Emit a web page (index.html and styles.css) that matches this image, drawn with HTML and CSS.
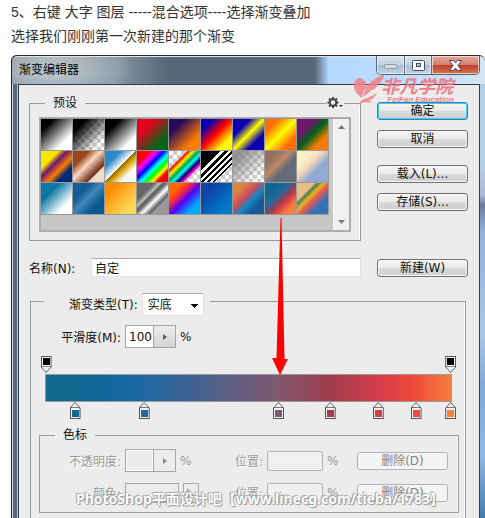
FILE: index.html
```html
<!DOCTYPE html>
<html lang="zh-CN">
	<head>
		<meta charset="utf-8" />
		<title>渐变编辑器</title>
		<link rel="stylesheet" href="styles.css">
	</head>
	<body>
		<div class="intro">
			<p>5、右键 大字 图层 -----混合选项----选择渐变叠加</p>
			<p>选择我们刚刚第一次新建的那个渐变</p>
		</div>

		<div class="window">
			<div class="titlebar">
				<h1>渐变编辑器</h1>
				<div class="caption">
					<button type="button" class="min" aria-label="最小化"><svg width="13" height="5"><rect x=".5" y=".5" width="12" height="4" rx="1" fill="#d5dce1" stroke="#929ba3"/></svg></button>
					<button type="button" class="max" aria-label="最大化"><svg width="13" height="11"><rect x=".5" y=".5" width="12" height="10" rx="1" fill="#fff" stroke="#454e5c"/><rect x="4.5" y="3.5" width="4" height="3" fill="#b9c4d0" stroke="#454e5c"/></svg></button>
					<button type="button" class="close" aria-label="关闭"><svg width="13" height="11"><path d="M.5.5h4l2 2.500 2-2.500h4L9 5.500l3.500 5h-4l-2-2.500-2 2.500h-4L4 5.500z" fill="#fff" stroke="#584850"/></svg></button>
				</div>
			</div>

			<form class="panel">
				<div class="top">
					<fieldset class="presets">
						<legend>预设</legend>
						<button type="button" class="gear" aria-label="选项">
							<svg width="17" height="14" viewBox="0 0 17 14">
								<circle cx="6" cy="6.500" r="3.300" fill="none" stroke="#444" stroke-width="2"/>
								<path d="M6 1v2M6 10v2M.5 6.500h2M9.500 6.500h2M2 2.500l1.500 1.500M8.500 9l1.500 1.500M10 2.500L8.500 4M3.500 9L2 10.500" stroke="#444" stroke-width="2"/>
								<path d="M12 9h4l-2 2z" fill="#222"/>
							</svg>
						</button>
						<div class="list">
							<div class="swatches">
								<button type="button" class="g1" aria-label="前景到背景"></button>
								<button type="button" class="g2" aria-label="前景到透明"></button>
								<button type="button" class="g3" aria-label="黑白"></button>
								<button type="button" class="g4" aria-label="红绿"></button>
								<button type="button" class="g5" aria-label="紫橙"></button>
								<button type="button" class="g6" aria-label="蓝红黄"></button>
								<button type="button" class="g7" aria-label="蓝黄蓝"></button>
								<button type="button" class="g8" aria-label="橙黄橙"></button>
								<button type="button" class="g9" aria-label="紫绿橙"></button>
								<button type="button" class="g10" aria-label="黄紫橙蓝"></button>
								<button type="button" class="g11" aria-label="铜色"></button>
								<button type="button" class="g12" aria-label="铬黄"></button>
								<button type="button" class="g13" aria-label="色谱"></button>
								<button type="button" class="g14" aria-label="透明彩虹"></button>
								<button type="button" class="g15" aria-label="透明条纹"></button>
								<button type="button" class="g16" aria-label="中灰密度"></button>
								<button type="button" class="g17" aria-label="棕灰"></button>
								<button type="button" class="g18" aria-label="米蓝"></button>
								<button type="button" class="g19" aria-label="蓝白"></button>
								<button type="button" class="g20" aria-label="深蓝"></button>
								<button type="button" class="g21" aria-label="橙黄"></button>
								<button type="button" class="g22" aria-label="银色"></button>
								<button type="button" class="g23" aria-label="橙紫蓝"></button>
								<button type="button" class="g24" aria-label="蓝色"></button>
								<button type="button" class="g25" aria-label="橙红蓝"></button>
								<button type="button" class="g26" aria-label="自定"></button>
								<button type="button" class="g27" aria-label="彩色"></button>
							</div>
							<div class="scroll">
								<svg width="7" height="4"><path d="M0 4L3.500 0 7 4z" fill="#777"/></svg>
								<svg width="7" height="4"><path d="M0 0h7L3.500 4z" fill="#777"/></svg>
							</div>
						</div>
					</fieldset>
					<div class="actions">
						<button type="button" class="btn ok">确定</button>
						<button type="button" class="btn">取消</button>
						<button type="button" class="btn load">载入(L)...</button>
						<button type="button" class="btn">存储(S)...</button>
					</div>
				</div>

				<div class="name-row">
					<label for="name">名称(N):</label>
					<input type="text" id="name" value="自定">
					<button type="button" class="btn">新建(W)</button>
				</div>

				<fieldset class="gradient">
					<legend>
						<label for="type">渐变类型(T):</label>
						<select id="type"><option>实底</option></select>
					</legend>
					<div class="smooth">
						<label for="smooth">平滑度(M):</label>
						<span class="spin">
							<input type="text" id="smooth" value="100">
							<button type="button" aria-label="调整平滑度"><svg width="4" height="6"><path d="M0 0l4 3-4 3z" fill="#4a5a9a"/></svg></button>
						</span>
						<span>%</span>
					</div>

					<div class="editor">
						<div class="rail upper">
							<button type="button" class="stop" aria-label="不透明度色标" style="left:0.4%"><i style="background:#000"></i></button>
							<button type="button" class="stop" aria-label="不透明度色标" style="left:99.8%"><i style="background:#000"></i></button>
						</div>
						<div class="bar"></div>
						<div class="rail lower">
							<button type="button" class="stop" aria-label="色标" style="left:7.5%"><i style="background:#126890"></i></button>
							<button type="button" class="stop" aria-label="色标" style="left:24.5%"><i style="background:#1f68a4"></i></button>
							<button type="button" class="stop" aria-label="色标" style="left:57.5%"><i style="background:#80586f"></i></button>
							<button type="button" class="stop" aria-label="色标" style="left:70.2%"><i style="background:#a03c4c"></i></button>
							<button type="button" class="stop" aria-label="色标" style="left:82%"><i style="background:#d53c4a"></i></button>
							<button type="button" class="stop" aria-label="色标" style="left:91.3%"><i style="background:#f04b38"></i></button>
							<button type="button" class="stop" aria-label="色标" style="left:99.8%"><i style="background:#f4813f"></i></button>
						</div>
					</div>

					<fieldset class="stops">
						<legend>色标</legend>
						<div class="stop-row">
							<label for="opacity">不透明度:</label>
							<div class="field">
								<span class="spin">
									<input type="text" id="opacity" disabled>
									<button type="button" aria-label="调整不透明度" disabled><svg width="4" height="6"><path d="M0 0l4 3-4 3z" fill="#888"/></svg></button>
								</span>
								<span>%</span>
							</div>
							<label for="pos1">位置:</label>
							<div class="field"><input type="text" class="pos" id="pos1" disabled><span>%</span></div>
							<button type="button" class="btn" disabled>删除(D)</button>
						</div>
						<div class="stop-row">
							<label for="color">颜色:</label>
							<div class="field">
								<button type="button" class="color" id="color" disabled></button>
								<button type="button" class="pick" aria-label="选择颜色" disabled><svg width="8" height="10"><path d="M0 0v10l8-2z" fill="#aaa"/></svg></button>
							</div>
							<label for="pos2">位置:</label>
							<div class="field"><input type="text" class="pos" id="pos2" disabled><span>%</span></div>
							<button type="button" class="btn" disabled>删除(D)</button>
						</div>
					</fieldset>
				</fieldset>
			</form>

			<!-- 箭头 -->
			<svg class="arrow" width="16" height="157" viewBox="0 0 16 157"><path d="M8.500 0h1l3 141h3.500L8 157 0 140h4.500z" fill="#f00"/></svg>

			<!-- 水印 -->
			<div class="logo">
				<svg width="30" height="30" viewBox="0 0 30 30">
					<path d="M8 23C-3 16-2 5 5 3c5 0 8 5 8 9-3 3-5 7-5 11z" fill="#ef8087"/>
					<path d="M9 22C11 11 18 3 30 0c0 3-2 6-4 8l-2 1c-1 3-3 5-5 6l-2 0C15 18 12 20 9 22z" fill="#ef8087"/>
					<path d="M5 30c1-4 4-6 8-7 4-2 7-3 10-5-2 4-5 7-9 8 2 0 4 1 5 1-4 2-9-2-14 3z" fill="#ef8087"/>
				</svg>
				<div>
					<b>非凡学院</b>
					<small>FeiFan Education</small>
				</div>
			</div>
			<p class="mark">PhotoShop平面设计吧【www.linecg.com/tieba/1783】</p>
		</div>
	</body>
</html>
```
FILE: styles.css
```css
*{
	margin: 0;
	padding: 0;
	box-sizing: border-box;
}
body{
	padding-left: 11px;
	background: #fff;
	color: #111;
	font-family: "DejaVu Sans","Noto Sans CJK SC",sans-serif;
	font-size: 12px;
}
button,input,select{
	font: inherit;
	color: inherit;
}
fieldset{
	border: 1px solid #9c9c9c;
	min-width: 0;
	box-shadow: inset -1px 0 #fff;
}
.intro{
	padding-bottom: 7px;
	font-family: "Liberation Sans","Noto Sans CJK SC",sans-serif;
	font-size: 14px;
	line-height: 24px;
	color: #333;
	white-space: nowrap;
}
.window{
	position: relative;
	padding: 0 5px 0 7px;
	border-radius: 6px 6px 0 0;
	background:
		linear-gradient(#b5cfe9,#b5cfe9 110px,#b0b8d0 140px,#6a7a9c 150px,#8fb0d8 175px,#a8c8e8 280px,#80a8d8 330px,#8fb8e4 400px,#427ab0) right/5px 100% no-repeat,
		linear-gradient(90deg,#1c262e 1px,#d4dde4 1px,#d4dde4 2px,#566879 2px,#566879 6px,#b8c4cc 6px) left/7px 100% no-repeat,
		#566879;
}
.titlebar{
	display: flex;
	justify-content: space-between;
	height: 29px;
	margin: 0 -5px 0 -7px;
	padding: 0 0 0 7px;
	border-top: 1px solid #222b32;
	border-left: 1px solid #222b32;
	border-radius: 6px 6px 0 0;
	box-shadow: inset 0 1px #dfe7ec;
	background:
		radial-gradient(80px 34px at 42px 14px,#c2cbd1 0,rgba(176,187,195,.8) 50%,rgba(130,146,159,0) 100%),
		linear-gradient(90deg,#75828d 0,#8494a0 22%,#566879 33%,#566879 64%,#b4d8ff 67%,#bcdcfc 80%,#d4e4f4);
}
.titlebar h1{
	font-size: 12px;
	font-weight: normal;
	line-height: 28px;
	color: #000;
}
.caption{
	display: flex;
	height: 19px;
	margin-right: 5px;
	border: 1px solid #536274;
	border-top: 0;
	border-radius: 0 0 5px 5px;
	overflow: hidden;
}
.caption button{
	display: flex;
	align-items: center;
	justify-content: center;
	border: 0;
	border-right: 1px solid #59687b;
	box-shadow: inset 0 0 0 1px rgba(255,255,255,.6);
	background: linear-gradient(#d6e2ee,#c1d1e1 50%,#a6bbcf 50%,#bed4e8);
}
.caption .min{
	width: 28px;
	padding-top: 3px;
}
.caption .max{
	width: 27px;
}
.caption .close{
	width: 47px;
	border-right: 0;
	background: linear-gradient(#e3a698,#d28273 48%,#b83d29 50%,#d57a54);
}
.panel{
	padding: 10px 11px 0 10px;
	border: 1px solid #303d48;
	border-bottom: 0;
	background: #ececec;
}
.top{
	display: flex;
	gap: 16px;
}
.presets{
	position: relative;
	flex: 1;
	padding: 6px 9px 8px;
}
.presets legend,.stops legend{
	height: 16px;
	margin-left: 15px;
	padding: 0 8px;
	line-height: 16px;
}
.presets legend{
	margin-left: 6px;
}
.gear{
	position: absolute;
	top: -15px;
	right: 16px;
	width: 17px;
	height: 14px;
	border: 0;
	background: #ececec;
}
.gear svg{
	display: block;
}
.list{
	display: flex;
	justify-content: space-between;
	height: 115px;
	border: 2px solid #acacac;
	background: #c6c6c6;
}
.swatches{
	display: grid;
	grid-template-columns: repeat(9,31px);
	grid-auto-rows: 31px;
	align-content: start;
	gap: 1px;
}
.swatches button{
	border: 0;
	outline: 1px solid #999;
}
.scroll{
	display: flex;
	flex-direction: column;
	align-items: center;
	justify-content: space-between;
	width: 16px;
	padding: 6px 0;
	border-left: 1px solid #fff;
	background: #f0f0f0;
}
.g1{background: linear-gradient(135deg,#000 20%,#fff 75%);}
.g2{background: linear-gradient(135deg,#000 22%,rgba(0,0,0,0) 80%),repeating-conic-gradient(#ccc 0 25%,#fff 0 50%) 0 0/8px 8px;}
.g3{background: linear-gradient(135deg,#000 25%,#fff 78%);}
.g4{background: linear-gradient(135deg,#e60020 28%,#066418 75%);}
.g5{background: linear-gradient(135deg,#290a59 25%,#ff7c00 75%);}
.g6{background: linear-gradient(135deg,#0a00b2 20%,#f00 48%,#fffc00 78%);}
.g7{background: linear-gradient(135deg,#0a00b2 28%,#fffc00 50%,#0a00b2 73%);}
.g8{background: linear-gradient(135deg,#ff6e02 22%,#ff0 50%,#ff6e02 78%);}
.g9{background: linear-gradient(135deg,#6f156c 28%,#00601b 50%,#fd7c00 75%);}
.g10{background: linear-gradient(135deg,#f9e600 28%,#6f156c 42%,#fd7c00 60%,#002874 76%);}
.g11{background: linear-gradient(135deg,#97461a 25%,#fbd8c5 45%,#6c2e16 72%,#efdbcd 76%);}
.g12{background: linear-gradient(135deg,#2989cc 25%,#fff 49%,#906a00 50%,#d99f00 58%,#fff 76%);}
.g13{background: linear-gradient(135deg,#f00 20%,#f0f 32%,#00f 44%,#0ff 55%,#0f0 65%,#ff0 74%,#f00 82%);}
.g14{background: linear-gradient(135deg,rgba(255,0,0,0) 28%,#f00 31%,#fff200 39%,#00a651 48%,#0ff 56%,#006 64%,#f0c 72%,rgba(255,0,0,0) 76%),repeating-conic-gradient(#ccc 0 25%,#fff 0 50%) 0 0/8px 8px;}
.g15{background: linear-gradient(135deg,#000 32%,#fff 32% 38%,#000 38% 44%,#fff 44% 49%,#000 49% 54%,#fff 54% 59%,#000 59% 64%,#fff 64% 68%,#000 68% 72%,transparent 72%),repeating-conic-gradient(#ccc 0 25%,#fff 0 50%) 0 0/8px 8px;}
.g16{background: linear-gradient(135deg,rgba(128,128,128,.8) 20%,rgba(128,128,128,0) 80%),repeating-conic-gradient(#ccc 0 25%,#fff 0 50%) 0 0/8px 8px;}
.g17{background: linear-gradient(135deg,#926f5e 20%,#bd8866 42%,#646c78 60%);}
.g18{background: linear-gradient(135deg,#f9f0c8 25%,#f5d9bb 42%,#90aad4 62%);}
.g19{background: linear-gradient(135deg,#0a78a5 30%,#fff 76%);}
.g20{background: linear-gradient(135deg,#135d94 30%,#4387b8 48%,#085b92 72%);}
.g21{background: linear-gradient(135deg,#ff8c00 20%,#ffd858 80%);}
.g22{background: linear-gradient(135deg,#666 28%,#c0c0b8 38%,#666 42%,#666 47%,#fff 57%,#606060 69%,#999 74%);}
.g23{background: linear-gradient(135deg,#ff6a00 20%,#ff2838 35%,#5000ff 53%,#0af 78%);}
.g24{background: linear-gradient(135deg,#0c44a8 25%,#0479c8 78%);}
.g25{background: linear-gradient(135deg,#dc843c 20%,#cc4c60 42%,#1688c0 58%,#165898 76%);}
.g26{background: linear-gradient(135deg,#106890 22%,#2468a0 40%,#a03c4c 57%,#e84444 68%,#f4803f 80%);}
.g27{background: linear-gradient(135deg,#e8bc84 28%,#4d7e58 34%,#e6b81c 43%,#ea5558 54%,#3074b8 72%);}
.actions{
	display: flex;
	flex-direction: column;
	gap: 10px;
	width: 91px;
	padding-top: 7px;
}
.load{
	margin-top: 7px;
}
.btn{
	display: block;
	width: 91px;
	height: 18px;
	border: 1px solid #707070;
	border-radius: 3px;
	background: linear-gradient(#f4f4f4,#ebebeb 50%,#dadada 50%,#cfcfcf);
	box-shadow: inset 0 0 0 1px #f8f8f8;
	line-height: 16px;
	text-align: center;
}
.btn.ok{
	border-color: #3c7fb1;
	box-shadow: inset 0 0 0 1px #38d0f8;
}
.btn:disabled{
	border-color: #adb2b5;
	background: #f4f4f4;
	color: #838383;
}
.name-row{
	display: grid;
	grid-template-columns: 62px 1fr 107px;
	align-items: center;
	margin-top: 17px;
}
.name-row input{
	height: 19px;
	padding-left: 3px;
	border: 1px solid #e2e3ea;
	border-top-color: #abadb3;
	background: #fff;
}
.name-row .btn{
	justify-self: end;
}
.gradient{
	margin: 16px 2px 0 1px;
	padding: 15px 6px 5px 8px;
	border-bottom: 0;
}
.gradient > legend{
	display: flex;
	gap: 4px;
	height: 17px;
	margin-left: 5px;
	padding: 0 6px 0 25px;
}
.gradient > legend label{
	line-height: 24px;
}
.gradient select{
	width: 62px;
	height: 23px;
	padding: 0 5px;
	border: 1px solid #e2e3ea;
	border-top-color: #abadb3;
	border-radius: 0;
	appearance: none;
	background:
		linear-gradient(to bottom left,#000 50%,transparent 50%) 48px 10px/4px 4px no-repeat,
		linear-gradient(to bottom right,#000 50%,transparent 50%) 52px 10px/4px 4px no-repeat,
		#fff;
}
.smooth{
	display: flex;
	align-items: center;
	gap: 4px;
	height: 23px;
}
.smooth label{
	width: 82px;
	text-align: right;
}
.spin{
	display: flex;
	width: 51px;
	height: 23px;
	border: 1px solid #a5a5aa;
}
.spin input{
	width: 28px;
	padding-left: 3px;
	border: 0;
	border-right: 1px solid #a5a5aa;
	background: #fff;
}
.spin button{
	display: flex;
	flex: 1;
	align-items: center;
	justify-content: center;
	border: 0;
	background: linear-gradient(#eee,#d4d4d4);
}
.editor{
	margin: 8px 7px 8px 6px;
}
.rail{
	position: relative;
	height: 18px;
}
.rail.lower{
	height: 17px;
}
.bar{
	height: 28px;
	border: 1px solid #999;
	background: linear-gradient(90deg,#126890 7.5%,#1268a0 16%,#1f68a4 24.5%,#80586f 57.5%,#a03c4c 70%,#d53c4a 82%,#f04b38 91.3%,#f4813f);
}
.stop{
	position: absolute;
	width: 11px;
	height: 17px;
	margin-left: -6px;
	border: 0;
	background: #555;
	clip-path: polygon(50% 0,100% 6px,100% 100%,0 100%,0 6px);
}
.stop::before{
	content: "";
	position: absolute;
	inset: 1px;
	background: linear-gradient(#f2f2f2 4px,#777 4px,#777 5px,#f2f2f2 5px);
	clip-path: polygon(50% 0,100% 5px,100% 100%,0 100%,0 5px);
}
.stop i{
	position: absolute;
	left: 2px;
	bottom: 2px;
	width: 7px;
	height: 7px;
}
.upper .stop{
	clip-path: polygon(0 0,100% 0,100% 11px,50% 100%,0 11px);
}
.upper .stop::before{
	background: linear-gradient(#f2f2f2 9px,#888 9px,#888 10px,#f2f2f2 10px);
	clip-path: polygon(0 0,100% 0,100% 10px,50% 100%,0 10px);
}
.upper .stop i{
	top: 2px;
}
.stops{
	padding: 6px 10px 8px 0;
	color: #999;
}
.stops legend{
	color: #111;
}
.stop-row{
	display: grid;
	grid-template-columns: 81px 1fr 28px 86px 91px;
	column-gap: 4px;
	align-items: center;
	height: 23px;
}
.stop-row + .stop-row{
	margin-top: 9px;
}
.stop-row label{
	text-align: right;
	text-shadow: 1px 1px #fff;
	white-space: nowrap;
}
.field{
	display: flex;
	align-items: center;
	gap: 4px;
}
.stops .spin input,.stops .spin button{
	background: #ececec;
}
.stops .spin input{
	box-shadow: inset 0 0 0 1px #fff;
}
.pos{
	width: 56px;
	height: 20px;
	border: 1px solid #adb2b5;
	border-radius: 2px;
	background: #f0f0f0;
}
.color{
	width: 54px;
	height: 20px;
	border: 1px solid #aaa;
	background: #ececec;
}
.pick{
	display: flex;
	align-items: center;
	justify-content: center;
	width: 16px;
	height: 20px;
	border: 1px solid #aaa;
	background: #ececec;
}
.arrow{
	position: absolute;
	top: 163px;
	left: 261px;
}
.logo{
	position: absolute;
	top: 20px;
	right: 31px;
	display: flex;
	opacity: .85;
	color: #ee7078;
	font-style: italic;
	white-space: nowrap;
}
.logo svg{
	margin-right: -3px;
}
.logo b{
	display: block;
	margin-top: 3px;
	font-size: 18px;
	line-height: 18px;
}
.logo small{
	display: block;
	padding-left: 6px;
	font-family: "Liberation Sans",sans-serif;
	font-size: 8px;
	font-weight: bold;
	line-height: 8px;
}
.mark{
	position: absolute;
	top: 434px;
	left: 65px;
	font-family: "Noto Sans","Noto Sans CJK SC",sans-serif;
	font-size: 14px;
	font-weight: bold;
	line-height: 20px;
	color: #fff;
	text-shadow: 0 0 1px #888,1px 1px 1px #999,-1px -1px 1px #aaa;
	white-space: nowrap;
}
```
